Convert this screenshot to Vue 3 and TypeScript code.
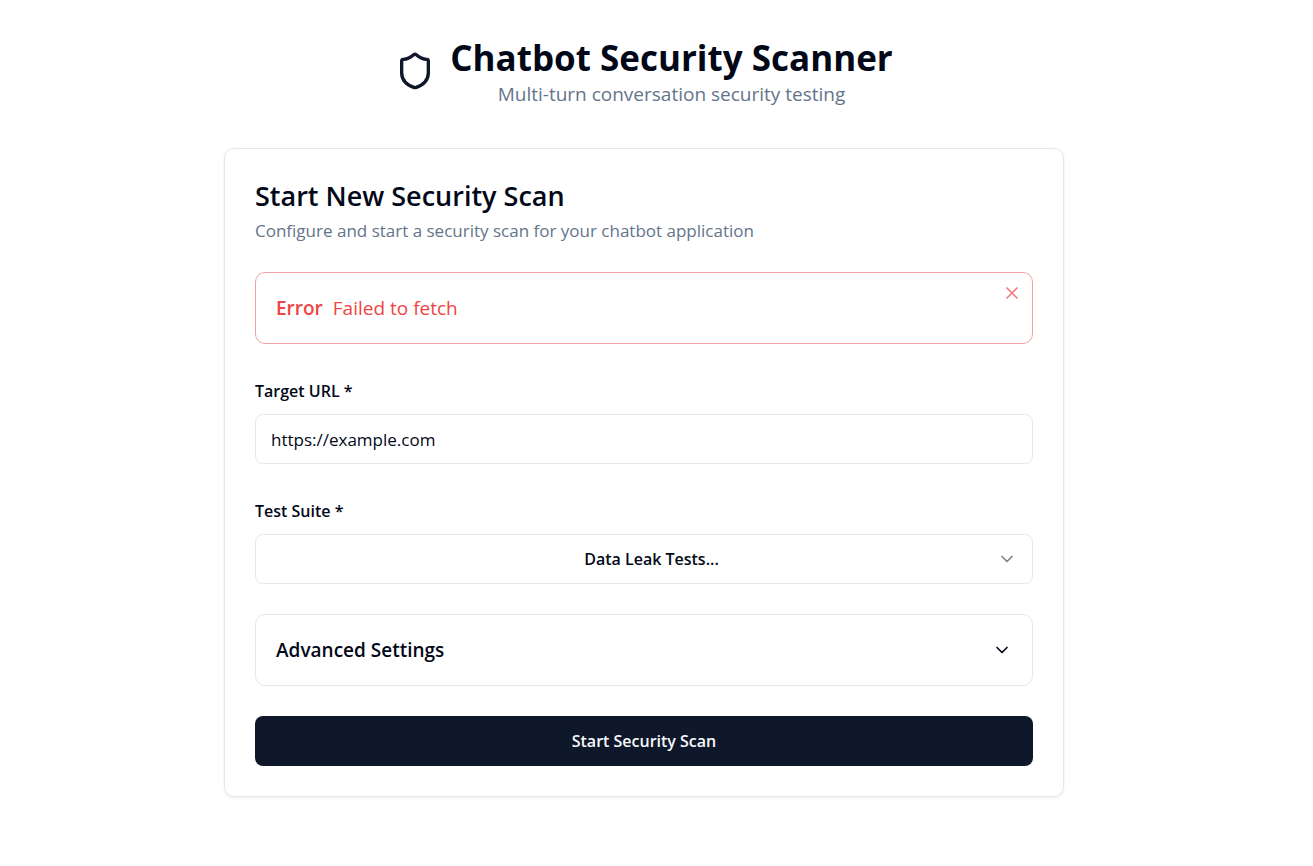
<script setup lang="ts">
import { ref } from 'vue'

const targetUrl = ref('https://example.com')
const testSuite = ref('data-leak')
const error = ref('Failed to fetch')
const advancedOpen = ref(false)
</script>

<template>
  <main class="page">
    <header class="header">
      <svg class="shield" viewBox="0 0 24 24" aria-hidden="true">
        <path d="M20 13c0 5-3.5 7.5-7.66 8.95a1 1 0 0 1-.67-.01C7.5 20.5 4 18 4 13V6a1 1 0 0 1 1-1c2 0 4.5-1.2 6.24-2.72a1.17 1.17 0 0 1 1.52 0C14.51 3.81 17 5 19 5a1 1 0 0 1 1 1z" />
      </svg>
      <div class="heading">
        <h1>Chatbot Security Scanner</h1>
        <p>Multi-turn conversation security testing</p>
      </div>
    </header>

    <section class="card">
      <div class="card-header">
        <h2>Start New Security Scan</h2>
        <p>Configure and start a security scan for your chatbot application</p>
      </div>

      <form class="form" @submit.prevent>
        <div v-if="error" class="alert" role="alert">
          <strong>Error</strong>
          <span>{{ error }}</span>
          <button class="dismiss" type="button" aria-label="Dismiss" @click="error = ''">
            <svg viewBox="0 0 24 24" aria-hidden="true"><path d="M18 6 6 18M6 6l12 12" /></svg>
          </button>
        </div>

        <div class="field">
          <label for="target-url">Target URL *</label>
          <input id="target-url" v-model="targetUrl" class="control" type="url" />
        </div>

        <div class="field">
          <label for="test-suite">Test Suite *</label>
          <div class="select-wrap">
            <select id="test-suite" v-model="testSuite" class="control select">
              <option value="data-leak">Data Leak Tests...</option>
            </select>
            <svg class="chevron muted" viewBox="0 0 24 24" aria-hidden="true"><path d="m6 9 6 6 6-6" /></svg>
          </div>
        </div>

        <button class="advanced" type="button" :aria-expanded="advancedOpen" @click="advancedOpen = !advancedOpen">
          <span>Advanced Settings</span>
          <svg class="chevron" viewBox="0 0 24 24" aria-hidden="true"><path d="m6 9 6 6 6-6" /></svg>
        </button>

        <button class="submit" type="submit">Start Security Scan</button>
      </form>
    </section>
  </main>
</template>

<style>
body {
  margin: 0;
  background: #fff;
}
</style>

<style scoped>
* {
  box-sizing: border-box;
}

.page {
  padding: 34px 25px 40px 0;
  color: #020817;
  font-family: "Segoe UI", "Open Sans", "Noto Sans", sans-serif;
  font-size: 17px;
}

h1,
h2,
p {
  margin: 0;
}

button,
input,
select {
  color: inherit;
  font: inherit;
}

button {
  cursor: pointer;
}

svg {
  flex: none;
  fill: none;
  stroke: currentColor;
  stroke-width: 2;
  stroke-linecap: round;
  stroke-linejoin: round;
}

.header {
  display: flex;
  align-items: center;
  justify-content: center;
  gap: 15px;
  margin-bottom: 41px;
}

.shield {
  width: 40px;
  height: 40px;
  color: #0f172a;
}

.heading {
  text-align: center;
}

h1 {
  font-size: 35px;
  font-weight: 700;
  line-height: 47px;
}

.heading p {
  color: #64748b;
  font-size: 19px;
  line-height: 26px;
}

.card {
  max-width: 840px;
  margin: 0 auto;
  padding: 30px;
  border: 1px solid #e5e7eb;
  border-radius: 10px;
  box-shadow: 0 1px 3px rgb(0 0 0 / 8%);
}

.card-header {
  display: flex;
  flex-direction: column;
  gap: 4px;
  margin-bottom: 27px;
}

h2 {
  font-size: 27px;
  font-weight: 600;
  line-height: 34px;
}

.card-header p {
  color: #64748b;
  line-height: 28px;
}

.form {
  display: flex;
  flex-direction: column;
  gap: 30px;
}

.alert {
  position: relative;
  display: flex;
  align-items: center;
  gap: 10px;
  height: 72px;
  padding: 0 20px;
  border: 1px solid #f5a0a0;
  border-radius: 10px;
  color: #ef4444;
  font-size: 19px;
}

.alert strong {
  font-weight: 600;
}

.dismiss {
  position: absolute;
  top: 10px;
  right: 10px;
  display: flex;
  padding: 0;
  border: 0;
  background: none;
  opacity: 0.7;
}

.dismiss svg,
.chevron {
  width: 20px;
  height: 20px;
}

.field {
  display: flex;
  flex-direction: column;
  gap: 6px;
}

label {
  font-size: 16px;
  font-weight: 600;
  line-height: 34px;
}

.control {
  width: 100%;
  height: 50px;
  padding: 0 15px;
  border: 1px solid #e2e8f0;
  border-radius: 8px;
  outline: none;
  background: #fff;
}

.select-wrap {
  position: relative;
}

.select {
  padding: 0 15px 0 30px;
  appearance: none;
  font-size: 16px;
  font-weight: 600;
  text-align: center;
  text-align-last: center;
}

.muted {
  position: absolute;
  top: 15px;
  right: 16px;
  opacity: 0.5;
  pointer-events: none;
}

.advanced {
  display: flex;
  align-items: center;
  justify-content: space-between;
  height: 72px;
  padding: 0 20px;
  border: 1px solid #e5e7eb;
  border-radius: 10px;
  background: #fff;
  font-size: 19px;
  font-weight: 600;
}

.submit {
  height: 50px;
  border: 0;
  border-radius: 8px;
  background: #0f172a;
  color: #f8fafc;
  font-size: 16px;
  font-weight: 600;
}
</style>
